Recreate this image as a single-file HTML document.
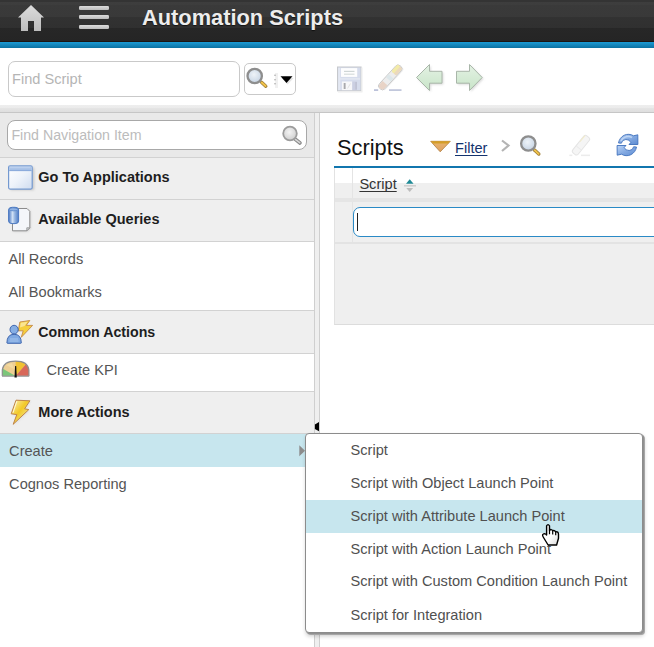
<!DOCTYPE html>
<html><head><meta charset="utf-8">
<style>
*{margin:0;padding:0;box-sizing:border-box}
html,body{width:654px;height:647px;overflow:hidden;background:#fff;font-family:"Liberation Sans",sans-serif;position:relative}
.a{position:absolute}
.t{position:absolute;white-space:nowrap;line-height:1}
#hdr{left:0;top:0;width:654px;height:41px;background:linear-gradient(#343434 0,#343434 1.5px,#3e3e3e 1.5px,#3d3d3d 5px,#3a3a3a 5px,#393939 17px,#323232 17px,#303030 28px,#272727 28px,#252525 40.5px,#1c1614 40.5px)}
#hdrline{left:0;top:40.5px;width:654px;height:1px;background:#1c1614}
#blue{left:0;top:41.5px;width:654px;height:6.5px;background:linear-gradient(#1c9bd5,#0c72a2)}
#sep{left:0;top:104.5px;width:654px;height:8.5px;background:linear-gradient(#eeeeee 0,#ebebeb 3px,#e4e4e4 3.5px,#dedede 7px,#d2d2d2 7.5px)}
#sepline{left:0;top:112px;width:654px;height:1px;background:#c6c6c6}
.inp{border:1px solid #c9c9c9;border-radius:7px;background:#fff}
.ph{color:#b5b5b5;font-size:14.6px}
#lp{left:0;top:113px;width:314px;height:534px;background:#fff}
.row{position:absolute;left:0;width:314px;border-bottom:1px solid #d2d2d2}
.g{background:#efefef}
.h{font-weight:bold;color:#1e1e1e;font-size:14.5px}
.n{color:#555;font-size:14.6px}
.m{color:#505050;font-size:14.6px}
</style></head><body>
<div id="hdr" class="a"></div>
<div id="hdrline" class="a"></div>
<div id="blue" class="a"></div>
<!-- home -->
<svg class="a" style="left:0;top:0" width="120" height="40">
  <defs><linearGradient id="hg" x1="0" y1="0" x2="0" y2="1"><stop offset="0" stop-color="#dcdcdc"/><stop offset="1" stop-color="#bdbdbd"/></linearGradient></defs>
  <path d="M31 5 L44 17.5 L41 17.5 L41 31 L34 31 L34 21 L28 21 L28 31 L21 31 L21 17.5 L18 17.5 Z" fill="url(#hg)"/>
  <rect x="79" y="6" width="30" height="4" rx="1.3" fill="url(#hg)"/>
  <rect x="79" y="15" width="30" height="4" rx="1.3" fill="url(#hg)"/>
  <rect x="79" y="25" width="30" height="4" rx="1.3" fill="url(#hg)"/>
</svg>
<div class="t" style="left:142px;top:6.7px;font-size:21.8px;font-weight:bold;color:#ededed;text-shadow:0 1px 1px rgba(0,0,0,.6)">Automation Scripts</div>

<!-- toolbar -->
<div class="a inp" style="left:8px;top:61px;width:232px;height:36px"></div>
<div class="t ph" style="left:12px;top:71.6px">Find Script</div>
<div class="a inp" style="left:244px;top:63px;width:52px;height:32px;border-radius:5px"></div>


<svg class="a" style="left:244px;top:63px" width="52" height="32">
  <defs>
    <radialGradient id="lens" cx="0.45" cy="0.4" r="0.6"><stop offset="0" stop-color="#eef3f8"/><stop offset="1" stop-color="#c6d4e4"/></radialGradient>
  </defs>
  <line x1="17.5" y1="19.3" x2="21.8" y2="23.2" stroke="#a0803a" stroke-width="3.4" stroke-linecap="round"/>
  <line x1="17.7" y1="19.5" x2="21.6" y2="23" stroke="#f2c44a" stroke-width="1.8" stroke-linecap="round"/>
  <circle cx="10.7" cy="13" r="7.2" fill="url(#lens)" stroke="#8e8e8e" stroke-width="2.3"/>
  <rect x="31" y="10" width="3" height="15" fill="#f0f0f0"/>
  <circle cx="31" cy="12.3" r="0.7" fill="#999"/><circle cx="31" cy="16.7" r="0.7" fill="#999"/><circle cx="31" cy="20.8" r="0.7" fill="#999"/>
  <path d="M37 14.3 L49 14.3 L43 21 Z" fill="#e4e4e4" transform="translate(0.6,0.6)"/>
  <path d="M36.5 13.3 L48.5 13.3 L42.5 20 Z" fill="#000"/>
</svg>
<svg class="a" style="left:330px;top:60px" width="160" height="36">
  <!-- save -->
  <rect x="7.5" y="7" width="23.6" height="23.8" fill="#d6dcec" stroke="#c6c8cc" stroke-width="1"/>
  <rect x="8.3" y="7.8" width="2" height="22.2" fill="#e4e8f2"/>
  <rect x="11" y="8.1" width="16.2" height="8.8" fill="#fdfdfe"/>
  <rect x="14" y="10.8" width="10.5" height="1.2" fill="#cfd6d6"/>
  <rect x="14" y="13.6" width="10.5" height="1.2" fill="#d6dcdc"/>
  <rect x="9" y="18.3" width="21" height="1.2" fill="#e6eaf3"/>
  <rect x="11.9" y="21.5" width="10.4" height="8.6" fill="#f7f7f9"/>
  <rect x="13.7" y="23" width="1.9" height="6" fill="#a9a9ad"/>
  <path d="M17.5 28.5 L20.5 23.5" stroke="#dcdcdc" stroke-width="0.8"/>
  <rect x="22.3" y="21.5" width="4.7" height="8.6" fill="#cbcfe2"/>
  <rect x="25.6" y="22" width="0.9" height="7.5" fill="#b6b8c8"/>
  <rect x="31.2" y="7.5" width="1.3" height="24" fill="#ececec"/>
  <rect x="8" y="31.2" width="24.5" height="1.3" fill="#eeeeee"/>
  <!-- eraser -->
  <rect x="44" y="29.2" width="4.2" height="1.8" fill="#bcc2da"/>
  <rect x="59" y="29.2" width="12.5" height="1.8" fill="#c2c8dc"/>
  <g transform="translate(60.4,17.2) rotate(-47.5)">
    <rect x="-14.5" y="-2.6" width="30" height="7.5" rx="2.5" fill="#e2e2e2" opacity="0.6"/>
    <rect x="-15.5" y="-3.7" width="30.5" height="7.4" rx="3.2" fill="#ededed" stroke="#c9c9c9" stroke-width="0.9"/>
    <path d="M-12 -3.2 L-8 -3.2 L-8 3.2 L-12 3.2 A3.2 3.2 0 0 1 -12 -3.2 Z" fill="#e8d3c6"/>
    <rect x="-3" y="-3.2" width="4" height="6.4" fill="#dde7ea"/>
    <rect x="5" y="-3.2" width="9.5" height="6.4" rx="1.5" fill="#ebd9bd"/>
    <rect x="5" y="-3.2" width="9.5" height="3.1" rx="1" fill="#f3eba8"/>
  </g>
  <!-- left arrow -->
  <defs>
    <linearGradient id="ag" x1="0" y1="0" x2="0" y2="1"><stop offset="0" stop-color="#e4f2e4"/><stop offset="1" stop-color="#c8e4c8"/></linearGradient>
    <filter id="sh" x="-20%" y="-20%" width="140%" height="140%"><feGaussianBlur stdDeviation="1"/></filter>
  </defs>
  <path d="M86.5 17.5 L99.5 4.5 L99.5 11.3 L112 11.3 L112 23.2 L99.5 23.2 L99.5 30.5 Z" fill="#d8d8d8" filter="url(#sh)" transform="translate(1.3,1.3)"/>
  <path d="M86.5 17.5 L99.5 4.5 L99.5 11.3 L112 11.3 L112 23.2 L99.5 23.2 L99.5 30.5 Z" fill="url(#ag)" stroke="#a9b6a9" stroke-width="1"/>
  <!-- right arrow -->
  <path d="M152.2 17.5 L139.5 4.5 L139.5 11.3 L126.5 11.3 L126.5 23.2 L139.5 23.2 L139.5 30.5 Z" fill="#d8d8d8" filter="url(#sh)" transform="translate(1.3,1.3)"/>
  <path d="M152.2 17.5 L139.5 4.5 L139.5 11.3 L126.5 11.3 L126.5 23.2 L139.5 23.2 L139.5 30.5 Z" fill="url(#ag)" stroke="#a9b6a9" stroke-width="1"/>
</svg>

<div id="sep" class="a"></div>
<div id="sepline" class="a"></div>

<!-- left panel -->
<div id="lp" class="a">
  <div class="row" style="top:0;height:45px;background:#e9e9e9"></div>
  <div class="row g" style="top:45px;height:42px"></div>
  <div class="row g" style="top:87px;height:42px"></div>
  <div class="row" style="top:129px;height:69px"></div>
  <div class="row g" style="top:198px;height:43px"></div>
  <div class="row" style="top:241px;height:38px"></div>
  <div class="row g" style="top:279px;height:42px"></div>
  <div class="row" style="top:321px;height:33px;background:#c7e6ee;border:0"></div>
</div>
<div class="a inp" style="left:7px;top:120px;width:300px;height:30px;border-color:#a8a8a8;border-radius:8px"></div>
<div class="t ph" style="left:11.4px;top:127.9px;font-size:14.2px;color:#bcbcbc">Find Navigation Item</div>


<svg class="a" style="left:0;top:113px" width="314" height="320">
  <defs>
    <linearGradient id="wg" x1="0" y1="0" x2="1" y2="1"><stop offset="0" stop-color="#ffffff"/><stop offset="0.5" stop-color="#eef3fa"/><stop offset="1" stop-color="#cfdcf0"/></linearGradient>
    <linearGradient id="cyl" x1="0" y1="0" x2="1" y2="0"><stop offset="0" stop-color="#4a78c4"/><stop offset="0.4" stop-color="#d2e2f6"/><stop offset="0.6" stop-color="#9ab8e2"/><stop offset="1" stop-color="#4e7cc6"/></linearGradient>
    <radialGradient id="ng" cx="0.45" cy="0.4" r="0.6"><stop offset="0" stop-color="#f4f4f4"/><stop offset="1" stop-color="#cfcfcf"/></radialGradient>
  </defs>
  <!-- nav magnifier (gray) -->
  <line x1="295" y1="26" x2="300" y2="30" stroke="#8a8a8a" stroke-width="3.6" stroke-linecap="round"/>
  <line x1="295.3" y1="26.3" x2="299.7" y2="29.7" stroke="#d8d8d8" stroke-width="1.6" stroke-linecap="round"/>
  <circle cx="290" cy="20.5" r="6.8" fill="url(#ng)" stroke="#9c9c9c" stroke-width="1.8"/>
  <!-- window icon -->
  <rect x="9.5" y="53.5" width="24" height="23" rx="1.5" fill="#9a9a9a" opacity="0.45" transform="translate(0.8,0.8)" filter="url(#sh)"/>
  <rect x="8.6" y="52.8" width="23.6" height="23.3" rx="1.5" fill="url(#wg)" stroke="#7499d0" stroke-width="1.2"/>
  <path d="M9.2 53.4 L31.6 53.4 L31.6 57.4 L9.2 57.4 Z" fill="#a6c0e6"/>
  <rect x="9.2" y="57.2" width="22.4" height="0.9" fill="#7a9fd6"/>
  <rect x="10" y="54.4" width="20.5" height="0.8" fill="#c8daf2"/>
  <!-- queries icon -->
  <path d="M12.5 95.5 L27 95.5 L29.8 98.3 L29.8 114.8 L26.8 117.8 L12.5 117.8 Z" fill="#9a9a9a" opacity="0.4" transform="translate(0.8,0.8)" filter="url(#sh)"/>
  <path d="M12.5 95.5 L27 95.5 L29.8 98.3 L29.8 114.8 L26.8 117.8 L12.5 117.8 Z" fill="#f4f6fa" stroke="#8c8c8c" stroke-width="1"/>
  <path d="M26.8 117.8 L29.8 114.8 L26.8 114.8 Z" fill="#d8dde4" stroke="#8c8c8c" stroke-width="0.8"/>
  <rect x="8.6" y="94.3" width="10" height="16.3" rx="3.5" ry="2.6" fill="url(#cyl)" stroke="#4a78c0" stroke-width="1"/>
  <ellipse cx="13.6" cy="96.4" rx="4.3" ry="1.5" fill="#8fb2e4" stroke="#4a78c0" stroke-width="0.6"/>
  <!-- person + lightning -->
  <path d="M19.8 209 L29.8 207.5 L26.2 212.4 L32.6 212.4 L21.3 224.3 L23.2 217.8 L18.3 217.8 Z" fill="#f6cf3c" stroke="#c48a48" stroke-width="0.9" stroke-linejoin="round"/>
  <path d="M20.8 209.8 L27.6 208.8 L24.5 213 L20 214.5 Z" fill="#fbeaa8" opacity="0.8"/>
  <path d="M6.9 230 Q6.9 221.3 14.1 221.3 Q21.3 221.3 21.3 230 Q21.3 230.3 20.5 230.3 L7.7 230.3 Q6.9 230.3 6.9 230 Z" fill="#7fa9e2" stroke="#3f66ae" stroke-width="1"/>
  <ellipse cx="14.1" cy="216.6" rx="4.1" ry="4.3" fill="#86aee4" stroke="#3f66ae" stroke-width="1"/>
  <path d="M10 226 L18 226 M9.5 228 L18.5 228" stroke="#b8d0f0" stroke-width="0.7"/>
  <!-- gauge -->
  <defs><clipPath id="gc"><path d="M2.3 263 L2.3 257 C3 251 8 248.2 15.6 248.2 C23 248.2 28.2 251 28.9 257 L28.9 263 Z"/></clipPath></defs>
  <g clip-path="url(#gc)">
    <rect x="0" y="246" width="32" height="20" fill="#eecf94"/>
    <path d="M15.6 263 L0 254 L0 264 Z" fill="#7cc67a"/>
    <path d="M15.6 263 L15.6 246 L30.4 246 Z" fill="#f1c232"/>
    <path d="M15.6 263 L30.4 246 L32 246 L32 264 Z" fill="#d8685a"/>
    <path d="M6 252 L12 250 L14 256 Z" fill="#f6e0a8" opacity="0.7"/>
  </g>
  <path d="M2.3 263 L2.3 257 C3 251 8 248.2 15.6 248.2 C23 248.2 28.2 251 28.9 257 L28.9 263" fill="none" stroke="#8e8e8e" stroke-width="1.2"/>
  <rect x="2" y="262.5" width="27.2" height="1.3" fill="#999"/>
  <path d="M14.5 264.5 L15.1 253 L16.2 253 L16.8 264.5 Z" fill="#111"/>
  <!-- lightning -->
  <defs><linearGradient id="lg" x1="0" y1="0" x2="1" y2="1"><stop offset="0" stop-color="#fbf3c4"/><stop offset="0.45" stop-color="#f3c926"/><stop offset="0.7" stop-color="#f1dc70"/><stop offset="1" stop-color="#f3eaa8"/></linearGradient></defs>
  <path d="M16 287.2 L29.9 287.8 L24.6 295.8 L28.8 296.6 L13.2 311.3 L16.8 301.6 L11.2 300.8 Z" fill="#bbb" opacity="0.35" transform="translate(0.8,0.8)" filter="url(#sh)"/>
  <path d="M16 287.2 L29.9 287.8 L24.6 295.8 L28.8 296.6 L13.2 311.3 L16.8 301.6 L11.2 300.8 Z" fill="url(#lg)" stroke="#bf8448" stroke-width="1" stroke-linejoin="round"/>
  <path d="M16.8 288.3 L13 299.8" stroke="#fffbe8" stroke-width="0.9"/>
</svg>

<div class="t h" style="left:38.3px;top:169.7px">Go To Applications</div>
<div class="t h" style="left:38.3px;top:212px">Available Queries</div>
<div class="t n" style="left:8.6px;top:251.6px">All Records</div>
<div class="t n" style="left:8.6px;top:285px">All Bookmarks</div>
<div class="t h" style="left:38.3px;top:324.6px;font-size:14.2px">Common Actions</div>
<div class="t n" style="left:46.4px;top:363px">Create KPI</div>
<div class="t h" style="left:38.3px;top:404.6px">More Actions</div>
<div class="t n" style="left:9.1px;top:443.5px">Create</div>
<div class="t n" style="left:9.1px;top:476.5px">Cognos Reporting</div>

<!-- splitter -->
<div class="a" style="left:314px;top:113px;width:6px;height:534px;background:#efefef;border-left:1px solid #cfcfcf;border-right:1px solid #cfcfcf"></div>

<!-- right panel -->
<div class="t" style="left:337px;top:137.1px;font-size:21.8px;color:#111">Scripts</div>
<div class="t" style="left:455px;top:140.7px;font-size:14.6px;color:#14336e;text-decoration:underline;text-underline-offset:2.1px;text-decoration-skip-ink:none">Filter</div>
<div class="a" style="left:334px;top:166px;width:320px;height:2px;background:#1176ae"></div>
<div class="a" style="left:334px;top:168px;width:320px;height:157px;background:#efefef;border-left:1px solid #e2e2e2;border-bottom:1px solid #dcdcdc"></div>
<div class="a" style="left:335px;top:168px;width:319px;height:14.5px;background:#fff"></div>
<div class="a" style="left:335px;top:197.5px;width:319px;height:4.5px;background:#e5e5e5"></div>
<div class="a" style="left:335px;top:241.5px;width:319px;height:2px;background:#e3e3e3"></div>
<div class="a" style="left:352px;top:168px;width:1px;height:29.5px;background:#e4e4e4"></div>
<div class="a" style="left:352px;top:202px;width:1px;height:39.5px;background:#e4e4e4"></div>
<div class="a" style="left:353px;top:207px;width:320px;height:30px;background:#fff;border:1.6px solid #2a8ac6;border-radius:7px"></div>
<div class="a" style="left:356.8px;top:213px;width:1.4px;height:18px;background:#222"></div>
<div class="t" style="left:359.4px;top:177.2px;font-size:14.6px;color:#333;text-decoration:underline;text-underline-offset:2.2px;text-decoration-skip-ink:none">Script</div>


<svg class="a" style="left:320px;top:125px" width="334" height="75">
  <defs>
    <linearGradient id="fg" x1="0" y1="0" x2="0" y2="1"><stop offset="0" stop-color="#e8b46e"/><stop offset="1" stop-color="#dea060"/></linearGradient>
    <linearGradient id="rg" x1="0" y1="0" x2="1" y2="1"><stop offset="0" stop-color="#bcd4f6"/><stop offset="0.5" stop-color="#84aae2"/><stop offset="1" stop-color="#5e8cd2"/></linearGradient>
  </defs>
  <!-- filter triangle -->
  <path d="M110.7 16.3 L130.3 16.3 L120.2 26.8 Z" fill="url(#fg)" stroke="#b07c3c" stroke-width="0.8"/>
  <path d="M111.2 16.3 L129.8 16.3 L128.2 18.4 L112.8 18.4 Z" fill="#d49e28"/>
  <!-- chevron -->
  <path d="M182 15.5 L188.5 20.5 L182 26" fill="none" stroke="#b4b4b4" stroke-width="2.2"/>
  <!-- magnifier -->
  <line x1="214.5" y1="25" x2="218.8" y2="29" stroke="#a0803a" stroke-width="3.4" stroke-linecap="round"/>
  <line x1="214.7" y1="25.2" x2="218.6" y2="28.8" stroke="#f2c44a" stroke-width="1.8" stroke-linecap="round"/>
  <circle cx="208.3" cy="18.5" r="7.2" fill="url(#lens)" stroke="#8e8e8e" stroke-width="2.3"/>
  <!-- faint eraser -->
  <g>
    <rect x="249.3" y="29.6" width="3" height="1.5" fill="#ececec"/>
    <rect x="261" y="29.6" width="9" height="1.5" fill="#ececec"/>
    <g transform="translate(261,20.2) rotate(-51)">
      <rect x="-11" y="-3.5" width="22" height="7" rx="2.5" fill="#f5f5f5" stroke="#e4e4e4" stroke-width="1"/>
      <path d="M2 -3 L10 -3" stroke="#f3eccc" stroke-width="1.1"/>
      <path d="M-3.5 -3 L-3.5 3" stroke="#eaeaea" stroke-width="1"/>
    </g>
  </g>
  <!-- refresh -->
  <g transform="translate(297,9)">
    <path d="M1.5 9 A10 10.5 0 0 1 16.5 1.8 L20.8 0.8 L20.9 10.5 L12 10.5 L13.8 8.6 A4.8 4.2 0 0 0 4.4 9.2 Z" fill="url(#rg)" stroke="#4070bc" stroke-width="0.9"/>
    <path d="M4 7 A8 8 0 0 1 15 3.5" fill="none" stroke="#c8dcf6" stroke-width="1.5" opacity="0.8"/>
    <path d="M19.5 13 A10 10.5 0 0 1 4.5 20.2 L0.2 21.2 L0.1 11.5 L9 11.5 L7.2 13.4 A4.8 4.2 0 0 0 16.6 12.8 Z" fill="url(#rg)" stroke="#4070bc" stroke-width="0.9"/>
  </g>
  <!-- sort -->
  <path d="M86 58.8 L93.6 58.8 L89.7 54.3 Z" fill="#1f8a96"/>
  <rect x="84" y="60" width="12" height="1.6" fill="#cfcfcf"/>
  <path d="M86.3 63 L93.1 63 L89.7 66.9 Z" fill="#bdbdbd"/>
</svg>

<!-- menu -->
<div class="a" style="left:305px;top:433px;width:338px;height:200px;background:#fff;border:1px solid #8c8c8c;border-radius:4px;box-shadow:1px 1px 0 #909090,2px 2px 0.5px #a6a6a6,1px 3px 4px rgba(0,0,0,.22);overflow:hidden">
  <div class="a" style="left:0;top:66px;width:340px;height:33px;background:#c7e6ee"></div>
</div>
<div class="t m" style="left:350.6px;top:442.9px">Script</div>
<div class="t m" style="left:350.6px;top:475.9px">Script with Object Launch Point</div>
<div class="t m" style="left:350.6px;top:509px">Script with Attribute Launch Point</div>
<div class="t m" style="left:350.6px;top:541.6px">Script with Action Launch Point</div>
<div class="t m" style="left:350.6px;top:574.4px">Script with Custom Condition Launch Point</div>
<div class="t m" style="left:350.6px;top:607.6px">Script for Integration</div>

<!-- splitter handle & submenu arrow -->
<svg class="a" style="left:296px;top:418px" width="26" height="42">
  <path d="M18.9 6.6 L23 4 L23 13.3 L18.9 11 Z" fill="#000"/>
  <path d="M3.3 27.3 L9 32.8 L3.3 38.3 Z" fill="#8c8c8c"/>
</svg>
<!-- hand cursor -->
<svg class="a" style="left:530px;top:515px" width="40" height="40">
  <defs><linearGradient id="hand" x1="0" y1="0" x2="1" y2="1"><stop offset="0.55" stop-color="#fff"/><stop offset="1" stop-color="#d8d8d8"/></linearGradient></defs>
  <g transform="translate(-530,-515)">
  <path d="M546.6 534.5 L546.6 525.9 Q548 523.4 549.5 525.9 L549.5 530.4 Q551.2 528.6 552.8 530.7 Q554.4 529.8 555.8 531.9 Q558.2 531.3 558.5 534 L558.5 538.3 L556.6 545 L548.1 545 L543.2 537 Q541.6 534.3 544.2 533.6 Q545.6 533.5 546.6 535 Z" fill="url(#hand)" stroke="#000" stroke-width="1.4" stroke-linejoin="round"/>
  <path d="M549.5 530.2 L549.5 534.2 M552.7 530.9 L552.7 534.6 M555.7 532 L555.7 535.3" stroke="#000" stroke-width="1.2"/>
  </g>
</svg>
</body></html>
